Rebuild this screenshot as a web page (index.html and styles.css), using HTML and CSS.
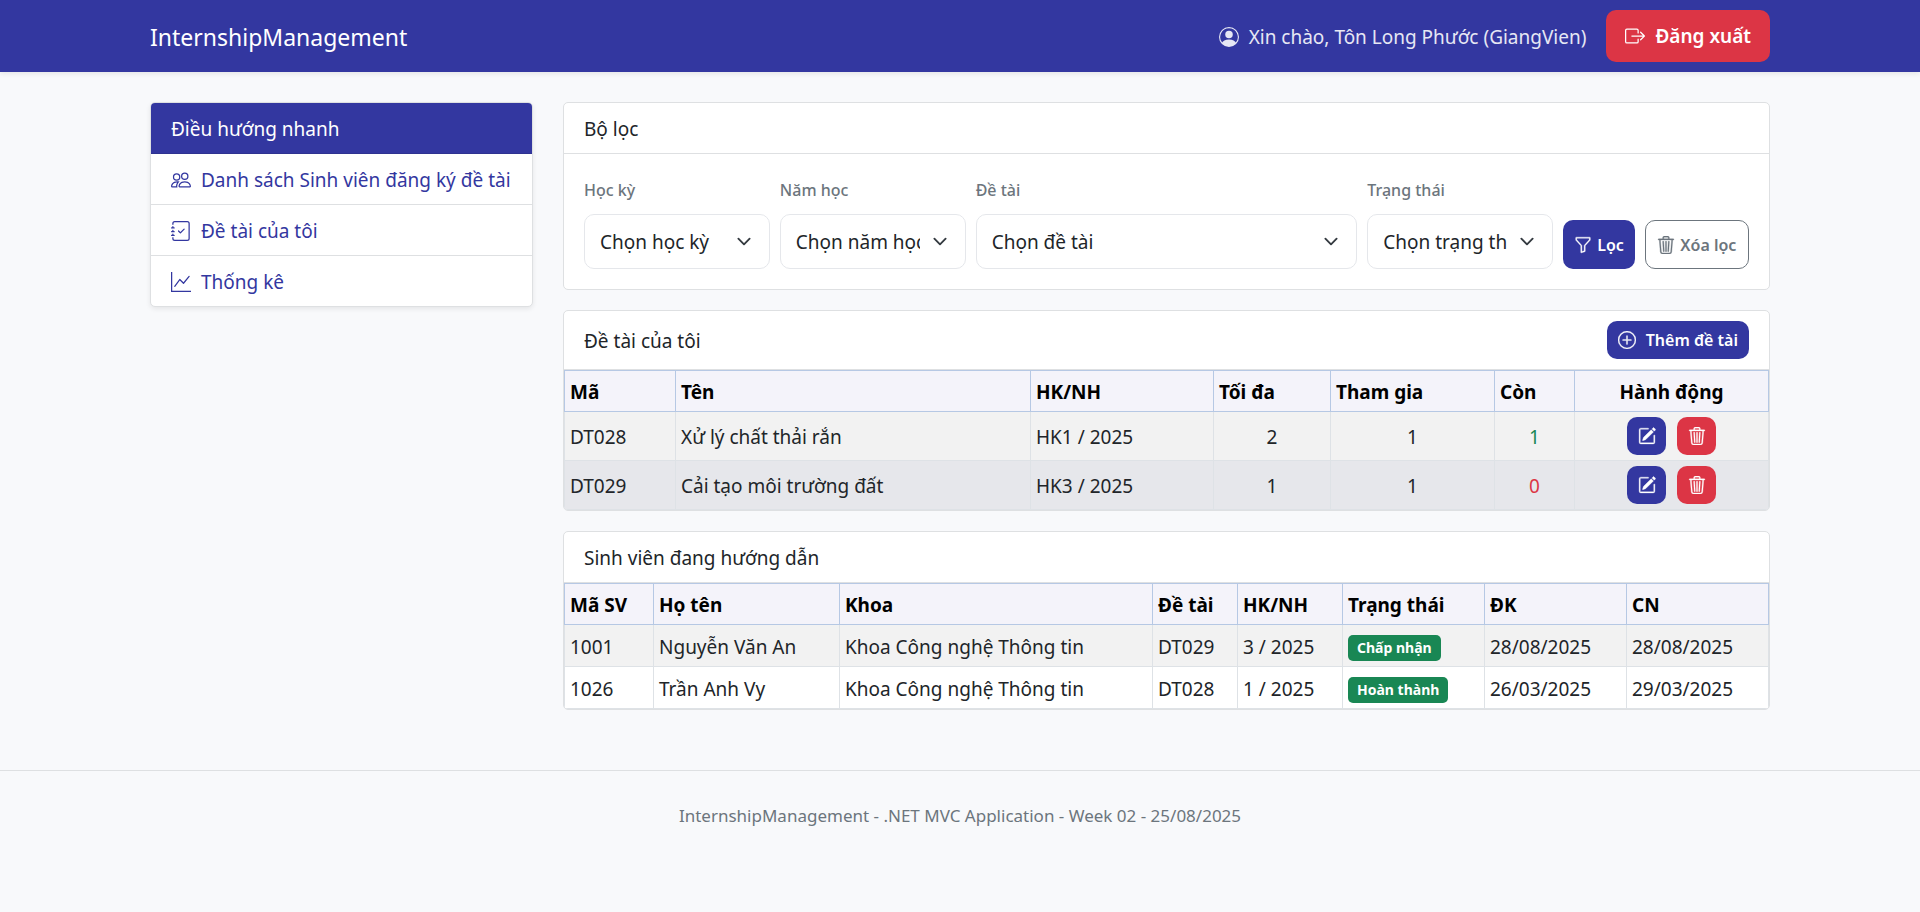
FILE: index.html
```html
<!DOCTYPE html>
<html lang="vi">
<head>
<meta charset="utf-8">
<title>InternshipManagement</title>
<link rel="stylesheet" href="styles.css">
</head>
<body>
<svg class="sprite" aria-hidden="true">
  <symbol id="i-user" viewBox="0 0 16 16"><path d="M11 6a3 3 0 1 1-6 0 3 3 0 0 1 6 0"/><path fill-rule="evenodd" d="M0 8a8 8 0 1 1 16 0A8 8 0 0 1 0 8m8-7a7 7 0 0 0-5.468 11.37C3.242 11.226 4.805 10 8 10s4.757 1.225 5.468 2.37A7 7 0 0 0 8 1"/></symbol>
  <symbol id="i-exit" viewBox="0 0 16 16"><path fill-rule="evenodd" d="M10 12.5a.5.5 0 0 1-.5.5h-8a.5.5 0 0 1-.5-.5v-9a.5.5 0 0 1 .5-.5h8a.5.5 0 0 1 .5.5v2a.5.5 0 0 0 1 0v-2A1.5 1.5 0 0 0 9.500 2h-8A1.500 1.500 0 0 0 0 3.500v9A1.500 1.500 0 0 0 1.500 14h8a1.500 1.500 0 0 0 1.500-1.500v-2a.5.5 0 0 0-1 0z"/><path fill-rule="evenodd" d="M15.854 8.354a.5.5 0 0 0 0-.708l-3-3a.5.5 0 0 0-.708.708L14.293 7.500H5.500a.5.5 0 0 0 0 1h8.793l-2.147 2.146a.5.5 0 0 0 .708.708z"/></symbol>
  <symbol id="i-people" viewBox="0 0 16 16"><path d="M15 14s1 0 1-1-1-4-5-4-5 3-5 4 1 1 1 1zm-7.978-1L7 12.996c.001-.264.167-1.030.760-1.720C8.312 10.629 9.282 10 11 10c1.717 0 2.687.630 3.240 1.276.593.690.758 1.457.760 1.720l-.008.002-.014.002zM11 7a2 2 0 1 0 0-4 2 2 0 0 0 0 4m3-2a3 3 0 1 1-6 0 3 3 0 0 1 6 0M6.936 9.280a6 6 0 0 0-1.230-.247A7 7 0 0 0 5 9c-4 0-5 3-5 4q0 1 1 1h4.216A2.240 2.240 0 0 1 5 13c0-1.010.377-2.042 1.090-2.904.243-.294.526-.569.846-.816M4.920 10A5.500 5.500 0 0 0 4 13H1c0-.260.164-1.030.760-1.724.545-.636 1.492-1.256 3.160-1.275ZM1.500 5.500a3 3 0 1 1 6 0 3 3 0 0 1-6 0m3-2a2 2 0 1 0 0 4 2 2 0 0 0 0-4"/></symbol>
  <symbol id="i-journal" viewBox="0 0 16 16"><path fill-rule="evenodd" d="M10.854 6.146a.5.5 0 0 1 0 .708l-3 3a.5.5 0 0 1-.708 0l-1.500-1.500a.5.5 0 1 1 .708-.708L7.500 8.793l2.646-2.647a.5.5 0 0 1 .708 0"/><path d="M3 0h10a2 2 0 0 1 2 2v12a2 2 0 0 1-2 2H3a2 2 0 0 1-2-2v-1h1v1a1 1 0 0 0 1 1h10a1 1 0 0 0 1-1V2a1 1 0 0 0-1-1H3a1 1 0 0 0-1 1v1H1V2a2 2 0 0 1 2-2"/><path d="M1 5v-.500a.5.5 0 0 1 1 0V5h.500a.5.5 0 0 1 0 1h-2a.5.5 0 0 1 0-1zm0 3v-.500a.5.5 0 0 1 1 0V8h.500a.5.5 0 0 1 0 1h-2a.5.5 0 0 1 0-1zm0 3v-.500a.5.5 0 0 1 1 0v.500h.500a.5.5 0 0 1 0 1h-2a.5.5 0 0 1 0-1z"/></symbol>
  <symbol id="i-graph" viewBox="0 0 16 16"><path fill-rule="evenodd" d="M0 0h1v15h15v1H0zm14.817 3.113a.5.5 0 0 1 .070.704l-4.500 5.500a.5.5 0 0 1-.740.037L7.060 6.767l-3.656 5.027a.5.5 0 0 1-.808-.588l4-5.500a.5.5 0 0 1 .758-.060l2.609 2.610 4.150-5.073a.5.5 0 0 1 .704-.070"/></symbol>
  <symbol id="i-funnel" viewBox="0 0 16 16"><path d="M1.500 1.500A.5.5 0 0 1 2 1h12a.5.5 0 0 1 .5.5v2a.5.5 0 0 1-.128.334L10 8.692V13.500a.5.5 0 0 1-.342.474l-3 1A.5.5 0 0 1 6 14.500V8.692L1.628 3.834A.5.5 0 0 1 1.500 3.500zm1 .5v1.308l4.372 4.858A.5.5 0 0 1 7 8.500v5.306l2-.666V8.500a.5.5 0 0 1 .128-.334L13.500 3.308V2z"/></symbol>
  <symbol id="i-trash" viewBox="0 0 16 16"><path d="M6.500 1h3a.5.5 0 0 1 .5.5v1H6v-1a.5.5 0 0 1 .5-.5M11 2.500v-1A1.500 1.500 0 0 0 9.500 0h-3A1.500 1.500 0 0 0 5 1.500v1H1.500a.5.5 0 0 0 0 1h.538l.853 10.660A2 2 0 0 0 4.885 16h6.230a2 2 0 0 0 1.994-1.840l.853-10.660h.538a.5.5 0 0 0 0-1zm1.958 1-.846 10.580a1 1 0 0 1-.997.920h-6.230a1 1 0 0 1-.997-.920L3.042 3.500zm-7.487 1a.5.5 0 0 1 .528.470l.500 8.500a.5.5 0 0 1-.998.060L5 5.030a.5.5 0 0 1 .470-.530Zm5.058 0a.5.5 0 0 1 .470.530l-.500 8.500a.5.5 0 1 1-.998-.060l.500-8.500a.5.5 0 0 1 .528-.470M8 4.500a.5.5 0 0 1 .5.5v8.500a.5.5 0 0 1-1 0V5a.5.5 0 0 1 .5-.5"/></symbol>
  <symbol id="i-plus" viewBox="0 0 16 16"><path d="M8 15A7 7 0 1 1 8 1a7 7 0 0 1 0 14m0 1A8 8 0 1 0 8 0a8 8 0 0 0 0 16"/><path d="M8 4a.5.5 0 0 1 .5.5v3h3a.5.5 0 0 1 0 1h-3v3a.5.5 0 0 1-1 0v-3h-3a.5.5 0 0 1 0-1h3v-3A.5.5 0 0 1 8 4"/></symbol>
  <symbol id="i-edit" viewBox="0 0 16 16"><path d="M15.502 1.940a.5.5 0 0 1 0 .706L14.459 3.690l-2-2L13.502.646a.5.5 0 0 1 .707 0l1.293 1.293zm-1.750 2.456-2-2L4.939 9.210a.5.5 0 0 0-.121.196l-.805 2.414a.25.25 0 0 0 .316.316l2.414-.805a.5.5 0 0 0 .196-.120z"/><path fill-rule="evenodd" d="M1 13.500A1.500 1.500 0 0 0 2.500 15h11a1.500 1.500 0 0 0 1.500-1.500v-6a.5.5 0 0 0-1 0v6a.5.5 0 0 1-.5.5h-11a.5.5 0 0 1-.5-.5v-11a.5.5 0 0 1 .5-.5H9a.5.5 0 0 0 0-1H2.500A1.500 1.500 0 0 0 1 2.500z"/></symbol>
</svg>

<header class="navbar">
  <div class="container navbar-inner">
    <a class="brand" href="#">InternshipManagement</a>
    <div class="account">
      <span class="user"><svg class="icon"><use href="#i-user"/></svg>Xin chào, Tôn Long Phước (GiangVien)</span>
      <button class="btn btn-danger btn-logout" type="button"><svg class="icon"><use href="#i-exit"/></svg>Đăng xuất</button>
    </div>
  </div>
</header>

<main class="container layout">
  <nav class="card sidebar" aria-label="Điều hướng nhanh">
    <h2 class="card-header">Điều hướng nhanh</h2>
    <a class="nav-item" href="#"><svg class="icon"><use href="#i-people"/></svg>Danh sách Sinh viên đăng ký đề tài</a>
    <a class="nav-item" href="#"><svg class="icon"><use href="#i-journal"/></svg>Đề tài của tôi</a>
    <a class="nav-item" href="#"><svg class="icon"><use href="#i-graph"/></svg>Thống kê</a>
  </nav>

  <div class="content">
    <section class="card">
      <h2 class="card-header">Bộ lọc</h2>
      <form class="filters">
        <div class="field">
          <label for="term">Học kỳ</label>
          <select id="term"><option>Chọn học kỳ</option></select>
        </div>
        <div class="field">
          <label for="year">Năm học</label>
          <select id="year"><option>Chọn năm học</option></select>
        </div>
        <div class="field field-wide">
          <label for="topic">Đề tài</label>
          <select id="topic"><option>Chọn đề tài</option></select>
        </div>
        <div class="field">
          <label for="status">Trạng thái</label>
          <select id="status"><option>Chọn trạng thái</option></select>
        </div>
        <div class="filter-actions">
          <button class="btn btn-primary btn-filter" type="button"><svg class="icon icon-sm"><use href="#i-funnel"/></svg>Lọc</button>
          <button class="btn btn-outline btn-filter" type="reset"><svg class="icon icon-sm"><use href="#i-trash"/></svg>Xóa lọc</button>
        </div>
      </form>
    </section>

    <section class="card">
      <div class="card-header card-header-tools">
        <h2>Đề tài của tôi</h2>
        <button class="btn btn-primary btn-add" type="button"><svg class="icon icon-sm"><use href="#i-plus"/></svg>Thêm đề tài</button>
      </div>
      <table class="table topics">
        <colgroup><col class="t-code"><col class="t-name"><col class="t-term"><col class="t-max"><col class="t-joined"><col class="t-left"><col class="t-actions"></colgroup>
        <thead>
          <tr><th>Mã</th><th>Tên</th><th>HK/NH</th><th>Tối đa</th><th>Tham gia</th><th>Còn</th><th class="center">Hành động</th></tr>
        </thead>
        <tbody>
          <tr>
            <td>DT028</td><td>Xử lý chất thải rắn</td><td>HK1 / 2025</td><td class="center">2</td><td class="center">1</td><td class="center success">1</td>
            <td class="actions-cell"><div class="row-actions">
              <button class="btn btn-primary btn-icon" type="button" aria-label="Sửa"><svg class="icon icon-sm"><use href="#i-edit"/></svg></button>
              <button class="btn btn-danger btn-icon" type="button" aria-label="Xóa"><svg class="icon icon-sm"><use href="#i-trash"/></svg></button>
            </div></td>
          </tr>
          <tr class="active">
            <td>DT029</td><td>Cải tạo môi trường đất</td><td>HK3 / 2025</td><td class="center">1</td><td class="center">1</td><td class="center danger">0</td>
            <td class="actions-cell"><div class="row-actions">
              <button class="btn btn-primary btn-icon" type="button" aria-label="Sửa"><svg class="icon icon-sm"><use href="#i-edit"/></svg></button>
              <button class="btn btn-danger btn-icon" type="button" aria-label="Xóa"><svg class="icon icon-sm"><use href="#i-trash"/></svg></button>
            </div></td>
          </tr>
        </tbody>
      </table>
    </section>

    <section class="card">
      <h2 class="card-header">Sinh viên đang hướng dẫn</h2>
      <table class="table students">
        <colgroup><col class="s-code"><col class="s-name"><col class="s-dept"><col class="s-topic"><col class="s-term"><col class="s-status"><col class="s-date"><col class="s-date"></colgroup>
        <thead>
          <tr><th>Mã SV</th><th>Họ tên</th><th>Khoa</th><th>Đề tài</th><th>HK/NH</th><th>Trạng thái</th><th>ĐK</th><th>CN</th></tr>
        </thead>
        <tbody>
          <tr><td>1001</td><td>Nguyễn Văn An</td><td>Khoa Công nghệ Thông tin</td><td>DT029</td><td>3 / 2025</td><td><span class="badge">Chấp nhận</span></td><td>28/08/2025</td><td>28/08/2025</td></tr>
          <tr><td>1026</td><td>Trần Anh Vy</td><td>Khoa Công nghệ Thông tin</td><td>DT028</td><td>1 / 2025</td><td><span class="badge">Hoàn thành</span></td><td>26/03/2025</td><td>29/03/2025</td></tr>
        </tbody>
      </table>
    </section>
  </div>
</main>

<footer class="footer">InternshipManagement - .NET MVC Application - Week 02 - 25/08/2025</footer>
</body>
</html>
```
FILE: styles.css
```css
:root {
  --primary: #3337a0;
  --danger: #dc3545;
  --success: #198754;
  --muted: #6c757d;
  --text: #212529;
  --line: #dee0e2;
  --cell-line: #dee2e6;
}

* { box-sizing: border-box; }

body {
  margin: 0;
  background: #f8f9fb;
  color: var(--text);
  font: 19px/30px "Noto Sans", "Open Sans", sans-serif;
}

h2 { margin: 0; font: inherit; }

a { text-decoration: none; }

.sprite { display: none; }

.icon {
  flex: none;
  width: 20px;
  height: 20px;
  fill: currentColor;
}

.icon-sm {
  width: 18px;
  height: 18px;
  overflow: visible;
  stroke: currentColor;
  stroke-width: 0.3;
}

.container {
  width: 100%;
  max-width: 1650px;
  margin: 0 auto;
  padding: 0 15px;
}

.navbar {
  background: var(--primary);
  box-shadow: 0 2px 5px rgba(0, 0, 0, 0.08);
}

.navbar-inner {
  display: flex;
  align-items: center;
  justify-content: space-between;
  padding-top: 10px;
  padding-bottom: 10px;
}

.brand { padding-top: 2px; color: #fff; font-size: 23px; }

.account { display: flex; align-items: center; gap: 20px; }

.user {
  display: flex;
  align-items: center;
  gap: 10px;
  padding-top: 2px;
  color: #e6e7f4;
}

.btn {
  display: inline-flex;
  align-items: center;
  justify-content: center;
  gap: 10px;
  border: 1px solid transparent;
  border-radius: 10px;
  padding: 0 10px;
  color: #fff;
  font: 600 16px/24px "Noto Sans", "Open Sans", sans-serif;
  white-space: nowrap;
}

.btn-primary { background: var(--primary); }
.btn-danger { background: var(--danger); }
.btn-outline { background: #fff; border-color: var(--muted); color: var(--muted); }
.btn-logout { height: 52px; padding: 0 18px; font-size: 19px; }
.btn-filter { height: 49px; gap: 5px; }
.btn-add { height: 38px; }
.btn-icon { width: 39px; height: 38px; padding: 0; }

.layout {
  display: grid;
  grid-template-columns: 383px minmax(0, 1fr);
  gap: 30px;
  align-items: start;
  padding-top: 30px;
}

.content { display: grid; gap: 20px; }

.card {
  overflow: hidden;
  background: #fff;
  border: 1px solid var(--line);
  border-radius: 5px;
}

.card-header {
  padding: 11px 20px 9px;
  border-bottom: 1px solid var(--line);
}

.card-header-tools {
  display: flex;
  align-items: center;
  justify-content: space-between;
  padding: 10px 20px;
}

.card-header-tools h2 { padding-top: 2px; }

.sidebar { box-shadow: 0 2px 5px rgba(0, 0, 0, 0.08); }

.sidebar .card-header { background: var(--primary); color: #fff; border-bottom-color: #2e3290; }

.nav-item {
  display: flex;
  align-items: center;
  gap: 10px;
  padding: 11px 20px 9px;
  color: var(--primary);
  white-space: nowrap;
}

.nav-item + .nav-item { border-top: 1px solid var(--line); }

.filters {
  display: grid;
  grid-template-columns: repeat(12, minmax(0, 1fr));
  gap: 10px;
  align-items: end;
  padding: 20px;
}

.field { grid-column: span 2; display: grid; gap: 8px; }
.field-wide { grid-column: span 4; }

.field label {
  color: var(--muted);
  font-size: 16px;
  font-weight: 500;
  line-height: 32px;
}

.field select {
  appearance: none;
  width: 100%;
  height: 55px;
  padding: 0 45px 0 15px;
  border: 1px solid #e5e7eb;
  border-radius: 10px;
  background: #fff url("data:image/svg+xml,%3Csvg xmlns='http://www.w3.org/2000/svg' viewBox='0 0 16 16'%3E%3Cpath fill='none' stroke='%23343a40' stroke-linecap='round' stroke-linejoin='round' stroke-width='2' d='m2 5 6 6 6-6'/%3E%3C/svg%3E") no-repeat right 15px center / 20px 15px;
  color: var(--text);
  font: inherit;
}

.filter-actions { grid-column: span 2; display: flex; gap: 10px; }
.filter-actions .btn-outline { flex: 1; }

.table {
  width: 100%;
  table-layout: fixed;
  border-collapse: collapse;
}

.table th,
.table td {
  padding: 6px 5px 4px;
  border: 1px solid var(--cell-line);
  text-align: left;
  white-space: nowrap;
}

.table th {
  background: #f4f3fa;
  border-color: #b6c8e4;
  color: #000;
  font-weight: 700;
}

.table .actions-cell { padding: 5px; }

.table tbody tr:nth-child(odd) { background: #f2f2f2; }
.table tbody tr.active { background: #e6e7eb; }
.table .center { text-align: center; }
.table .success { color: var(--success); }
.table .danger { color: var(--danger); }

.students tbody tr { height: 42px; }

.row-actions { display: flex; justify-content: center; gap: 11px; }

.t-code { width: 111px; }
.t-term { width: 183px; }
.t-max { width: 117px; }
.t-joined { width: 164px; }
.t-left { width: 80px; }
.t-actions { width: 194px; }

.s-code { width: 89px; }
.s-name { width: 186px; }
.s-topic { width: 85px; }
.s-term { width: 105px; }
.s-status { width: 142px; }
.s-date { width: 142px; }

.badge {
  display: inline-block;
  padding: 0 9px;
  border-radius: 5px;
  background: var(--success);
  color: #fff;
  font-size: 14px;
  font-weight: 700;
  line-height: 26px;
  vertical-align: middle;
}

.footer {
  margin-top: 60px;
  padding: 30px 15px;
  border-top: 1px solid var(--line);
  color: var(--muted);
  font-size: 17px;
  text-align: center;
}
```
